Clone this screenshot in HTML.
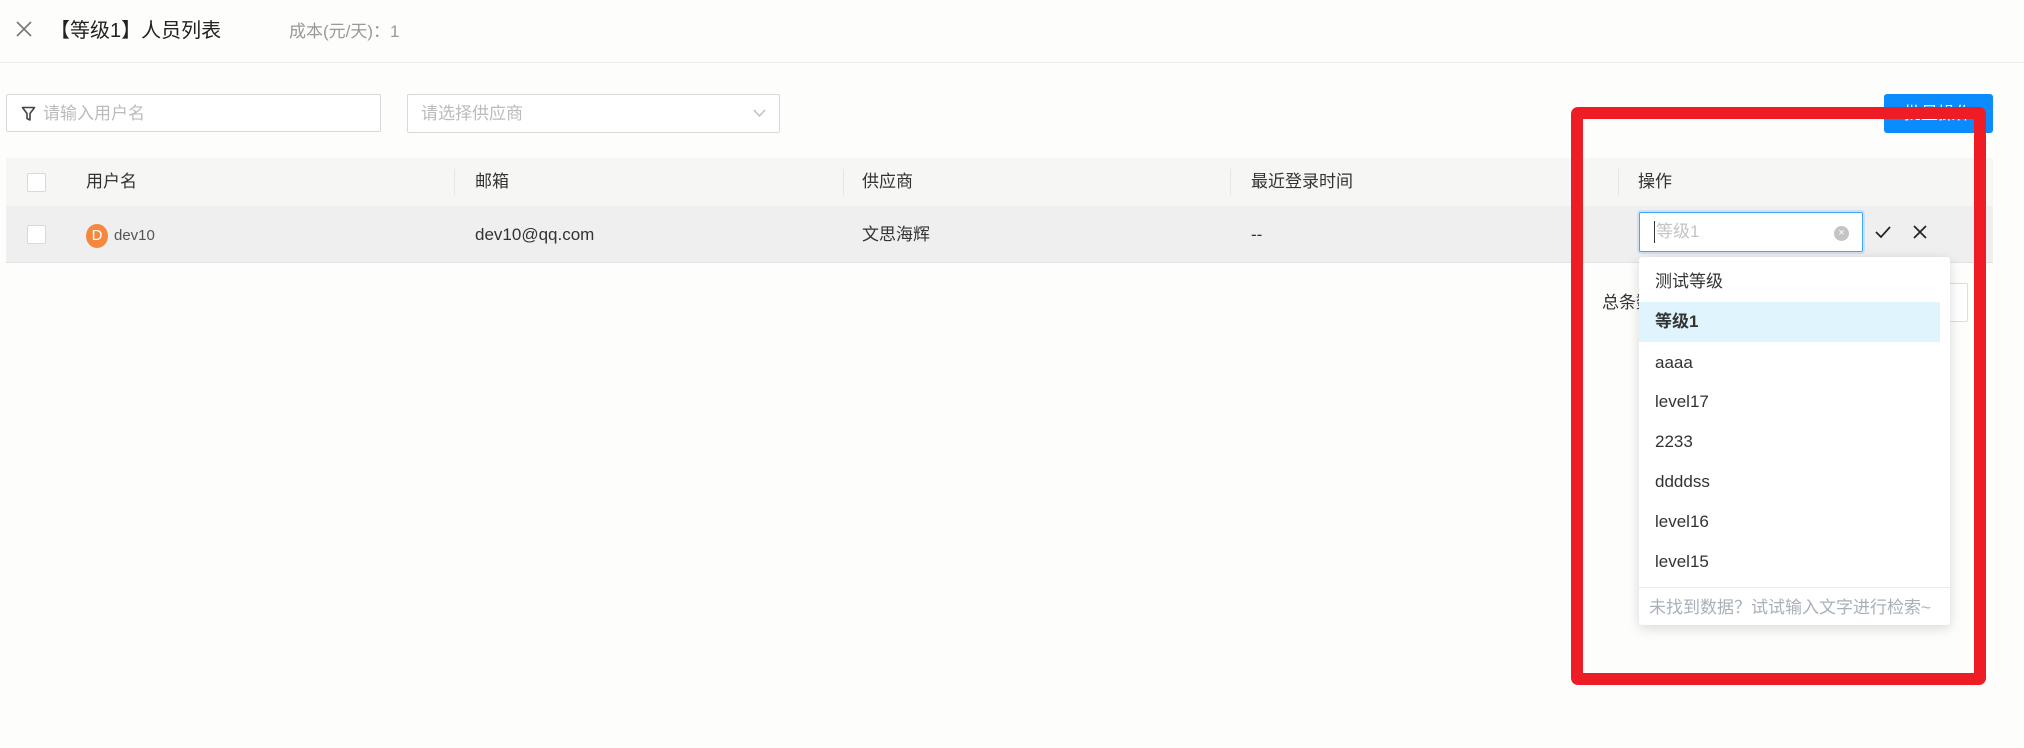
<!DOCTYPE html>
<html><head><meta charset="utf-8"><style>
*{margin:0;padding:0;box-sizing:border-box}
body{width:2024px;height:748px;background:#fdfdfb;font-family:"Liberation Sans","Noto Sans CJK SC",sans-serif;position:relative;overflow:hidden;color:#333}
.a{position:absolute;white-space:nowrap;line-height:20px}
.t17{font-size:17px}
.cb{position:absolute;width:19px;height:19px;border:1px solid #d9d9d9;background:#fff;border-radius:2px}
.sep{position:absolute;width:1px;height:26px;top:169px;background:#e6e6e6}
.it{position:absolute;left:1655px;font-size:17px;color:#333;line-height:20px}
</style></head><body>
<svg class="a" style="left:15px;top:20px" width="18" height="18" viewBox="0 0 18 18"><path d="M2 2L16 16M16 2L2 16" stroke="#777" stroke-width="1.6"/></svg>
<div class="a" style="left:50px;top:20px;font-size:20px;line-height:22px;color:#222">【等级1】人员列表</div>
<div class="a" style="left:289px;top:22px;font-size:17px;color:#999">成本(元/天)：1</div>
<div class="a" style="left:0;top:62px;width:2024px;height:1px;background:#ececec"></div>

<div class="a" style="left:6px;top:94px;width:375px;height:38px;border:1px solid #d9d9d9;background:#fff;border-radius:2px"></div>
<svg class="a" style="left:21px;top:106px" width="15" height="16" viewBox="0 0 15 16"><path d="M1.5 1.5H13.5L9 7.5V14L6 12.5V7.5Z" fill="none" stroke="#444" stroke-width="1.6" stroke-linejoin="round"/></svg>
<div class="a t17" style="left:43px;top:104px;color:#bbb">请输入用户名</div>
<div class="a" style="left:407px;top:94px;width:373px;height:39px;border:1px solid #d9d9d9;background:#fff;border-radius:2px"></div>
<div class="a t17" style="left:421px;top:104px;color:#bbb">请选择供应商</div>
<svg class="a" style="left:753px;top:108px" width="13" height="10" viewBox="0 0 13 10"><path d="M1 2L6.5 8L12 2" fill="none" stroke="#bbb" stroke-width="1.3"/></svg>

<div class="a" style="left:1884px;top:94px;width:109px;height:39px;background:#0a8cff;border-radius:3px"></div>
<div class="a t17" style="left:1904px;top:104px;color:#fff">批量操作</div>

<div class="a" style="left:6px;top:158px;width:1987px;height:48px;background:#f6f6f4"></div>
<div class="cb" style="left:27px;top:173px"></div>
<div class="a t17" style="left:86px;top:172px">用户名</div>
<div class="sep" style="left:454px"></div>
<div class="a t17" style="left:475px;top:172px">邮箱</div>
<div class="sep" style="left:843px"></div>
<div class="a t17" style="left:862px;top:172px">供应商</div>
<div class="sep" style="left:1230px"></div>
<div class="a t17" style="left:1251px;top:172px">最近登录时间</div>
<div class="sep" style="left:1618px"></div>
<div class="a t17" style="left:1638px;top:172px">操作</div>

<div class="a" style="left:6px;top:206px;width:1987px;height:57px;background:#efefef;border-bottom:1px solid #e2e2e2"></div>
<div class="cb" style="left:27px;top:225px"></div>
<div class="a" style="left:86px;top:224px;width:22px;height:24px;border-radius:50%;background:#f5873f;color:#fff;font-size:15px;text-align:center;line-height:24px">D</div>
<div class="a" style="left:114px;top:226px;font-size:15px;color:#555">dev10</div>
<div class="a t17" style="left:475px;top:225px">dev10@qq.com</div>
<div class="a t17" style="left:862px;top:225px">文思海辉</div>
<div class="a t17" style="left:1251px;top:225px">--</div>

<div class="a t17" style="left:1602px;top:293px">总条数</div>
<div class="a" style="left:1930px;top:283px;width:38px;height:39px;border:1px solid #ddd;border-radius:2px;background:#fff"></div>

<div class="a" style="left:1639px;top:212px;width:224px;height:40px;border:1px solid #40a9ff;background:#fff;border-radius:2px;box-shadow:0 0 0 2px rgba(24,144,255,0.15)"></div>
<div class="a" style="left:1654px;top:221px;width:1px;height:22px;background:#333"></div>
<div class="a t17" style="left:1656px;top:222px;color:#c4c4c4">等级1</div>
<div class="a" style="left:1834px;top:226px;width:15px;height:15px;border-radius:50%;background:#c4c4c4;color:#fff;font-size:11px;line-height:15px;text-align:center">×</div>
<svg class="a" style="left:1874px;top:223px" width="18" height="18" viewBox="0 0 18 18"><path d="M2 9L7 14L16 4" fill="none" stroke="#222" stroke-width="1.7"/></svg>
<svg class="a" style="left:1912px;top:224px" width="16" height="16" viewBox="0 0 16 16"><path d="M2 2L14 14M14 2L2 14" stroke="#222" stroke-width="1.7"/></svg>

<div class="a" style="left:1639px;top:257px;width:311px;height:368px;background:#fff;border-radius:3px;box-shadow:0 3px 12px rgba(0,0,0,0.15)"></div>
<div class="a" style="left:1639px;top:302px;width:301px;height:40px;background:#e0f4fe"></div>
<div class="it" style="top:272px">测试等级</div>
<div class="it" style="top:312px;font-weight:bold">等级1</div>
<div class="it" style="top:353px">aaaa</div>
<div class="it" style="top:392px">level17</div>
<div class="it" style="top:432px">2233</div>
<div class="it" style="top:472px">ddddss</div>
<div class="it" style="top:512px">level16</div>
<div class="it" style="top:552px">level15</div>
<div class="a" style="left:1639px;top:587px;width:311px;height:1px;background:#ececec"></div>
<div class="a t17" style="left:1649px;top:598px;color:#a8b0ba">未找到数据？试试输入文字进行检索~</div>

<div class="a" style="left:1571px;top:107px;width:415px;height:578px;border:12px solid #ee1c25;border-radius:7px"></div>
</body></html>
